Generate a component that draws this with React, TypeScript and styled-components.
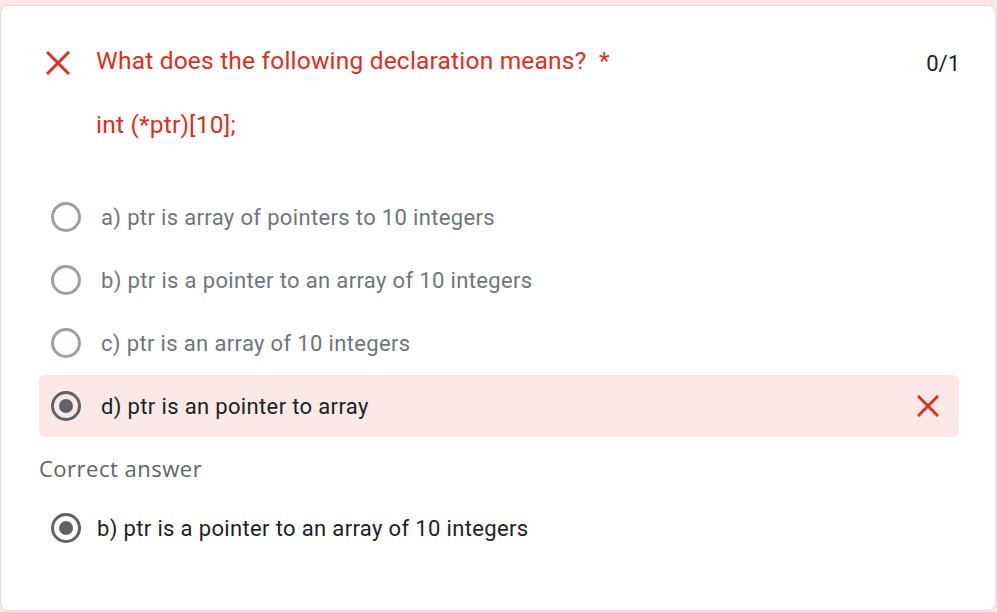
import React from "react";
import styled, { createGlobalStyle } from "styled-components";

const Global = createGlobalStyle`
  html, body { margin: 0; padding: 0; background: #fce8e6; }
  body { font-family: Roboto, "Liberation Sans", Arial, sans-serif; }
  * { box-sizing: border-box; }
`;

const Card = styled.div`
  margin: 5px 1px 0 0;
  height: 606px;
  background: #fff;
  border: 1px solid #dadce0;
  border-radius: 8px;
  padding: 39px 36px 0 38px;
  display: flex;
  flex-direction: column;
`;

const Header = styled.div`
  display: flex;
  align-items: flex-start;
`;

const WrongIcon = styled.svg`
  width: 24px;
  height: 24px;
  margin: 6px 26px 0 7px;
  flex: none;
`;

const TitleBlock = styled.div`
  flex: 1;
  display: flex;
  flex-direction: column;
  gap: 32px;
`;

const Title = styled.div`
  color: #d93025;
  font-size: 24.5px;
  letter-spacing: 0.2px;
  line-height: 32px;
`;

const Points = styled.div`
  color: #202124;
  font-size: 22px;
  line-height: 32px;
  margin-right: -1px;
  padding-top: 3px;
`;

const Options = styled.div`
  margin-top: 45px;
  display: flex;
  flex-direction: column;
  gap: 1px;
`;

const OptionRow = styled.div<{ $wrong?: boolean }>`
  height: 62px;
  display: flex;
  align-items: center;
  padding: 0 20px 0 12px;
  border-radius: 6px;
  background: ${(p) => (p.$wrong ? "#fce8e6" : "transparent")};
`;

const Radio = styled.span<{ $checked?: boolean }>`
  width: 30px;
  height: 30px;
  flex: none;
  border-radius: 50%;
  border: 3px solid ${(p) => (p.$checked ? "#5f6368" : "#9aa0a6")};
  display: flex;
  align-items: center;
  justify-content: center;
  &::after {
    content: "";
    display: ${(p) => (p.$checked ? "block" : "none")};
    width: 14px;
    height: 14px;
    border-radius: 50%;
    background: #5f6368;
  }
`;

const OptionText = styled.span<{ $dim?: boolean; $gap?: number }>`
  flex: 1;
  margin-left: ${(p) => p.$gap ?? 20}px;
  font-size: 22px;
  letter-spacing: 0.35px;
  color: ${(p) => (p.$dim ? "#70757a" : "#202124")};
`;

const RowMark = styled.svg`
  width: 22px;
  height: 22px;
  flex: none;
`;

const CorrectLabel = styled.div`
  margin-top: 17px;
  color: #5f6368;
  font-family: "Open Sans", Roboto, sans-serif;
  font-size: 22px;
  letter-spacing: 0.5px;
  line-height: 28px;
`;

const CorrectRow = styled.div`
  margin-top: 31px;
  display: flex;
  align-items: center;
  padding-left: 12px;
`;

const Cross = ({ size = 24, sw = 3 }: { size?: number; sw?: number }) => (
  <>
    <line x1="1" y1="1" x2={size - 1} y2={size - 1} stroke="#d93025" strokeWidth={sw} />
    <line x1={size - 1} y1="1" x2="1" y2={size - 1} stroke="#d93025" strokeWidth={sw} />
  </>
);

const options = [
  "a) ptr is array of pointers to 10 integers",
  "b) ptr is a pointer to an array of 10 integers",
  "c) ptr is an array of 10 integers",
];

export default function App() {
  return (
    <>
      <Global />
      <Card>
        <Header>
          <WrongIcon viewBox="0 0 24 24">
            <Cross />
          </WrongIcon>
          <TitleBlock>
            <Title>What does the following declaration means?&nbsp; *</Title>
            <Title>int (*ptr)[10];</Title>
          </TitleBlock>
          <Points>0/1</Points>
        </Header>
        <Options>
          {options.map((o) => (
            <OptionRow key={o}>
              <Radio />
              <OptionText $dim>{o}</OptionText>
            </OptionRow>
          ))}
          <OptionRow $wrong>
            <Radio $checked />
            <OptionText>d) ptr is an pointer to array</OptionText>
            <RowMark viewBox="0 0 22 22">
              <Cross size={22} sw={3} />
            </RowMark>
          </OptionRow>
        </Options>
        <CorrectLabel>Correct answer</CorrectLabel>
        <CorrectRow>
          <Radio $checked />
          <OptionText $gap={16}>b) ptr is a pointer to an array of 10 integers</OptionText>
        </CorrectRow>
      </Card>
    </>
  );
}
